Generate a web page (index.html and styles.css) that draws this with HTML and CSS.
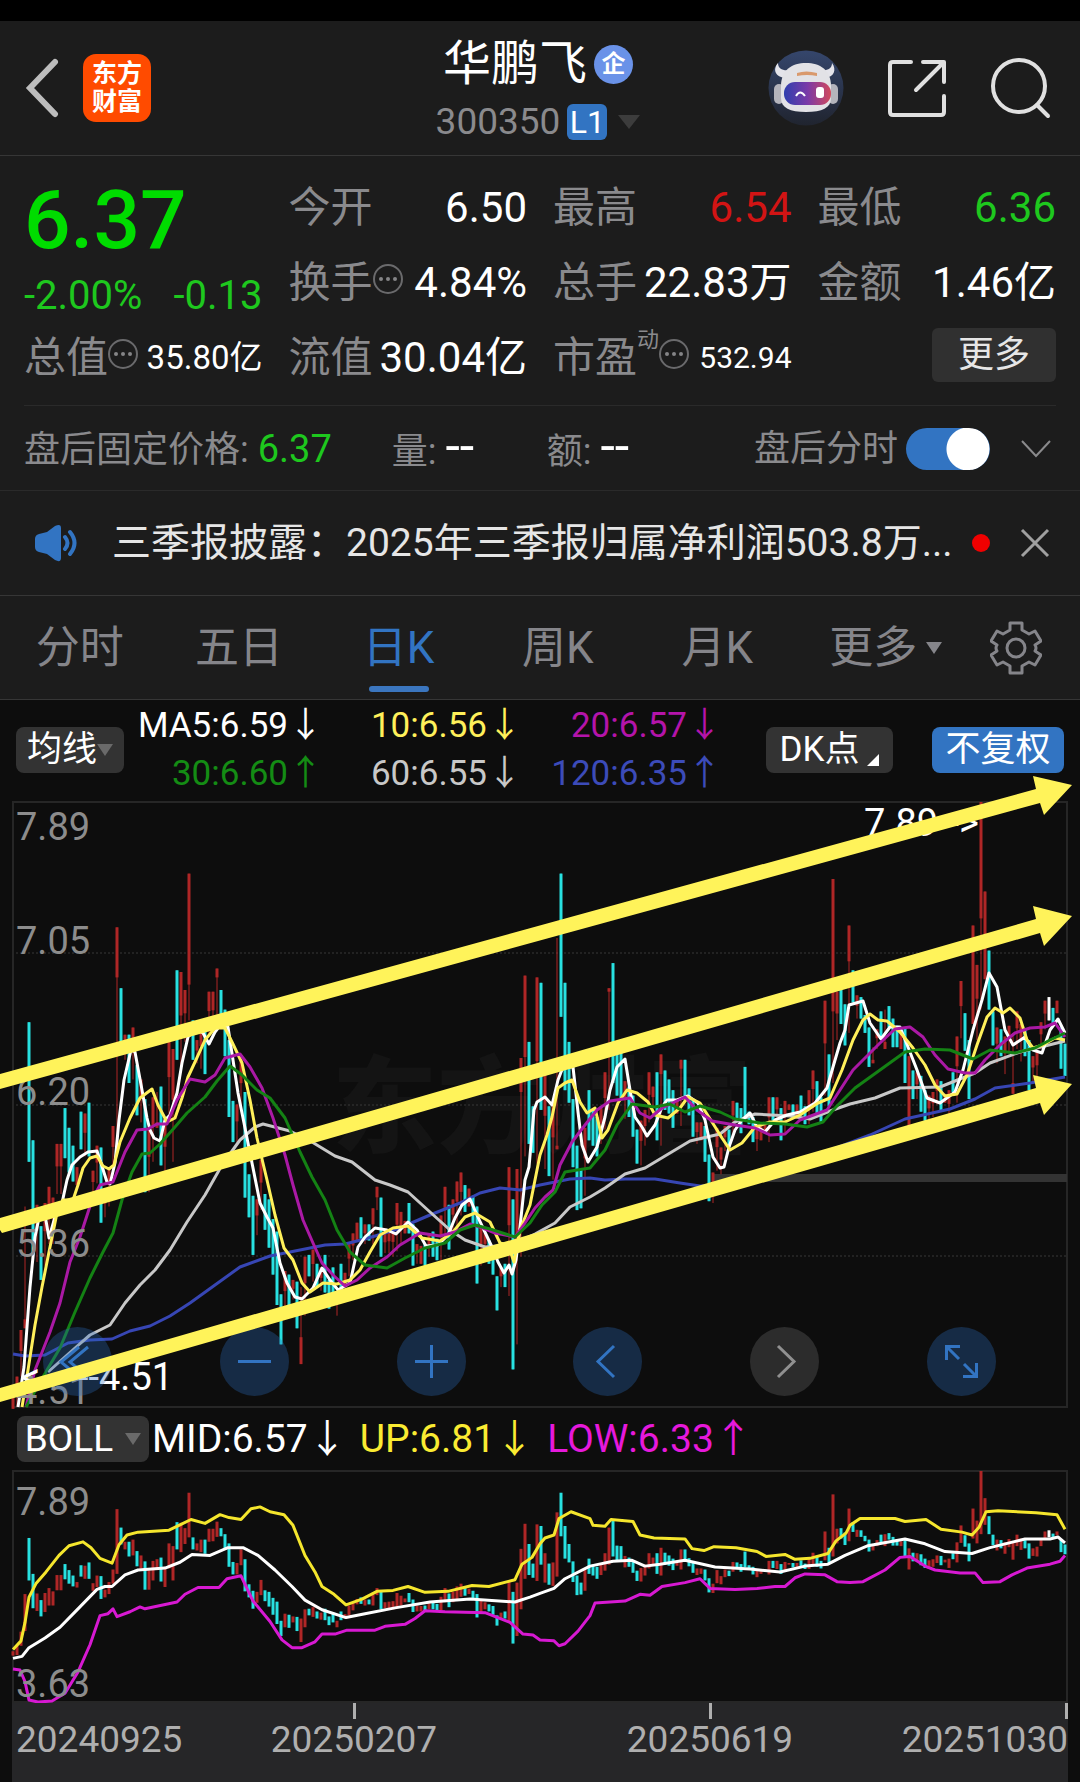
FILE: index.html
```html
<!DOCTYPE html>
<html lang="zh-CN">
<head>
<meta charset="utf-8">
<meta name="viewport" content="width=device-width, initial-scale=1">
<title>华鹏飞 300350</title>
<link rel="stylesheet" href="styles.css">
</head>
<body>
<header class="topbar">
  <div class="topbar-left">
    <button class="icon-btn" aria-label="返回"><svg width="36" height="60" viewBox="0 0 36 60"><path d="M31 4 6 30l25 26" fill="none" stroke="#bdbdbd" stroke-width="6" stroke-linecap="round"/></svg></button>
    <a class="logo" href="#">东方<br>财富</a>
  </div>
  <div class="title">
    <h1 class="stock-name">华鹏飞<span class="badge-corp">企</span></h1>
    <button class="stock-code">300350<span class="badge-l1">L1</span><span class="caret caret-lg"></span></button>
  </div>
  <div class="topbar-right">
    <button class="icon-btn" aria-label="助手"><svg width="76" height="76" viewBox="0 0 76 76">
      <defs>
        <linearGradient id="visor" x1="0" x2="1"><stop offset="0" stop-color="#2f3fae"/><stop offset=".5" stop-color="#7a3aa8"/><stop offset="1" stop-color="#d2495c"/></linearGradient>
        <linearGradient id="sky" x1="0" x2="0" y1="0" y2="1"><stop offset="0" stop-color="#35466c"/><stop offset="1" stop-color="#20242f"/></linearGradient>
      </defs>
      <circle cx="38" cy="38" r="37.500" fill="url(#sky)"/>
      <path d="M17 28C8 27 4 20 10 13c0 6 5 8 12 7zM57 28c9-1 12-8 7-15 0 6-5 8-12 7z" fill="#e4e4ea"/>
      <rect x="6" y="34" width="10" height="20" rx="5" fill="#b4b4bc"/><rect x="60" y="34" width="10" height="20" rx="5" fill="#b4b4bc"/>
      <path d="M13 36c0-16 11-23 25-23s25 7 25 23v12c0 10-9 14-25 14s-25-4-25-14z" fill="#e2e2e6"/>
      <path d="M29 23q9-3 20 0v3q-10-2-20 0z" fill="#d9996c"/>
      <rect x="16" y="32" width="47" height="23" rx="11" fill="url(#visor)"/>
      <path d="M28 46q4-7 9 0" fill="none" stroke="#fff" stroke-width="2"/><rect x="48" y="37" width="8" height="11" rx="3" fill="#fff"/>
    </svg></button>
    <button class="icon-btn" aria-label="分享"><svg width="60" height="60" viewBox="0 0 60 60"><path d="M24 4H6q-3 0-3 3v47q0 3 3 3h48q3 0 3-3V38M36 4h21v20M56 5 29 32" fill="none" stroke="#e0e0e0" stroke-width="4" stroke-linecap="round" stroke-linejoin="round"/></svg></button>
    <button class="icon-btn" aria-label="搜索"><svg width="62" height="62" viewBox="0 0 62 62"><circle cx="29" cy="29" r="26" fill="none" stroke="#e0e0e0" stroke-width="4"/><path d="m47 48 11 11" stroke="#e0e0e0" stroke-width="4" stroke-linecap="round"/></svg></button>
  </div>
</header>

<section class="quote">
  <div class="price-block">
    <strong class="price">6.37</strong>
    <div class="change"><span>-2.00%</span><span>-0.13</span></div>
  </div>
  <div class="cell"><span class="label">今开</span><span class="value">6.50</span></div>
  <div class="cell"><span class="label">最高</span><span class="value up">6.54</span></div>
  <div class="cell"><span class="label">最低</span><span class="value down">6.36</span></div>
  <div class="cell"><span class="label">换手<svg class="more-dot" viewBox="0 0 30 30"><use href="#dots"/></svg></span><span class="value">4.84%</span></div>
  <div class="cell"><span class="label">总手</span><span class="value">22.83万</span></div>
  <div class="cell"><span class="label">金额</span><span class="value">1.46亿</span></div>
  <div class="cell"><span class="label">总值<svg class="more-dot" viewBox="0 0 30 30"><use href="#dots"/></svg></span><span class="value mid">35.80亿</span></div>
  <div class="cell"><span class="label">流值</span><span class="value">30.04亿</span></div>
  <div class="cell"><span class="label">市盈<sup class="dyn">动</sup><svg class="more-dot" viewBox="0 0 30 30"><use href="#dots"/></svg></span><span class="value small">532.94</span></div>
  <div class="cell cell-end"><button class="more-btn">更多</button></div>
</section>
<svg class="defs" width="0" height="0"><defs><g id="dots"><circle cx="15" cy="15" r="14" fill="none" stroke="#6a6a6c" stroke-width="2"/><g fill="#858587"><circle cx="8" cy="15" r="2"/><circle cx="15" cy="15" r="2"/><circle cx="22" cy="15" r="2"/></g></g></defs></svg>

<section class="after-hours">
  <span>盘后固定价格: <b class="fixed">6.37</b></span>
  <span class="stat">量: <b class="dash">--</b></span>
  <span class="stat">额: <b class="dash">--</b></span>
  <label class="toggle">盘后分时<input type="checkbox" role="switch" checked></label>
  <button class="icon-btn" aria-label="展开"><svg width="32" height="20" viewBox="0 0 32 20"><path d="m2 2 14 15L30 2" fill="none" stroke="#8a8a8c" stroke-width="2"/></svg></button>
</section>

<section class="notice">
  <svg width="46" height="38" viewBox="0 0 46 38"><path d="M2 15q0-4 4-5l8-2 8-6q6-3 6 2v30q0 5-6 2l-8-6-8-2q-4-1-4-5z" fill="#3274c2"/><path d="M32 13q5 6 0 12M37 8q9 11 0 22" fill="none" stroke="#3274c2" stroke-width="4" stroke-linecap="round"/></svg>
  <a class="notice-text" href="#">三季报披露：2025年三季报归属净利润503.8万...</a>
  <i class="red-dot"></i>
  <button class="icon-btn" aria-label="关闭"><svg width="30" height="30" viewBox="0 0 30 30"><path d="m2 2 26 26M28 2 2 28" stroke="#a0a0a0" stroke-width="3"/></svg></button>
</section>

<nav class="tabs">
  <button class="tab">分时</button>
  <button class="tab">五日</button>
  <button class="tab active">日K</button>
  <button class="tab">周K</button>
  <button class="tab">月K</button>
  <button class="tab tab-more">更多<span class="caret caret-gray"></span></button>
  <button class="tab" aria-label="设置"><svg width="52" height="54" viewBox="0 0 52 54"><path d="M20 2h12v7l7 4 6-3 6 10-6 4q2 3 0 6l6 4-6 10-6-3-7 4v7H20v-7l-7-4-6 3L1 34l6-4q-2-3 0-6l-6-4L7 10l6 3 7-4z" fill="none" stroke="#85858a" stroke-width="3" stroke-linejoin="round"/><circle cx="26" cy="27" r="9" fill="none" stroke="#85858a" stroke-width="3"/></svg></button>
</nav>

<section class="ma-row">
  <button class="chip">均线<span class="caret"></span></button>
  <div class="ma-grid">
    <span class="c-ma5">MA5:6.59↓</span><span class="c-ma10">10:6.56↓</span><span class="c-ma20">20:6.57↓</span>
    <span class="c-ma30">30:6.60↑</span><span class="c-ma60">60:6.55↓</span><span class="c-ma120">120:6.35↑</span>
  </div>
  <button class="chip chip-dk">DK点<span class="corner"></span></button>
  <button class="chip chip-blue">不复权</button>
</section>

<section class="chart">
  <svg class="plot" viewBox="0 802 1080 606">
    <text class="watermark" x="332" y="1144">东方财富</text>
    <path class="gridline" d="M12 953H1067M12 1105H1067M12 1256H1067"/>
    <rect class="frame" x="13" y="802" width="1054" height="605"/>
    <rect x="713" y="1174" width="354" height="8" fill="#333"/>
    <g id="candles"></g>
    <g class="ma-lines">
      <polyline class="s-ma120" points="13,1354 25,1356 45,1355 68,1343 90,1340 112,1339 130,1331 150,1326 170,1316 190,1303 215,1285 240,1267 270,1256 300,1250 325,1245 345,1244 365,1239 395,1230 430,1215 460,1203 480,1193 500,1188 520,1190 540,1185 570,1179 590,1178 605,1180 625,1179 655,1179 680,1183 700,1186 740,1184 800,1162 870,1135 905,1119 950,1109 975,1099 995,1088 1030,1083 1065,1077"/>
      <polyline class="s-ma60" points="48,1372 75,1348 90,1335 110,1325 125,1303 140,1285 155,1270 170,1250 187,1222 205,1195 222,1165 240,1140 255,1127 263,1124 290,1131 312,1142 335,1156 352,1162 375,1180 390,1185 408,1192 430,1212 450,1230 465,1240 485,1247 510,1245 535,1234 555,1223 570,1207 590,1197 605,1188 625,1174 645,1168 665,1156 690,1141 720,1134 735,1122 755,1114 790,1116 810,1119 830,1111 850,1104 875,1098 900,1088 940,1087 965,1077 975,1073 990,1063 1020,1052 1045,1046 1065,1041"/>
      <polyline class="s-ma5" points="18,1407 24,1367 30,1287 35,1237 40,1213 45,1215 49,1238 55,1217 62,1203 67,1180 72,1165 80,1157 88,1152 97,1151 100,1160 107,1182 110,1184 115,1163 119,1120 124,1080 131,1050 135,1052 142,1090 147,1118 150,1130 154,1138 160,1141 165,1120 170,1115 177,1093 182,1063 188,1037 197,1028 203,1033 209,1044 215,1032 222,1023 228,1027 233,1060 238,1093 244,1123 252,1163 260,1203 267,1217 273,1228 280,1263 287,1283 295,1297 302,1299 313,1288 322,1268 330,1280 338,1290 350,1283 358,1247 365,1237 375,1228 387,1230 396,1234 408,1222 417,1230 426,1246 438,1245 448,1235 455,1218 462,1205 470,1199 477,1215 483,1228 492,1247 498,1262 504,1273 509,1265 512,1274 516,1260 520,1227 525,1180 529,1167 534,1110 537,1102 545,1097 552,1105 558,1080 563,1067 573,1067 578,1112 582,1145 588,1162 597,1147 605,1117 610,1090 617,1067 625,1059 630,1090 635,1117 642,1127 647,1136 655,1125 662,1107 667,1100 677,1100 688,1096 698,1103 705,1120 713,1157 720,1168 724,1167 729,1147 735,1130 742,1120 750,1113 757,1127 765,1132 775,1120 787,1115 800,1112 815,1103 827,1088 833,1067 840,1043 845,1030 849,1005 863,1001 870,1023 881,1039 890,1027 900,1027 908,1047 917,1070 927,1098 940,1103 955,1092 963,1070 973,1030 982,1000 989,973 997,987 1005,1030 1013,1045 1025,1037 1033,1050 1042,1053 1050,1030 1058,1019 1065,1033"/>
      <polyline class="s-ma10" points="22,1407 28,1370 35,1325 42,1287 50,1247 57,1213 63,1200 73,1200 78,1185 83,1168 90,1158 97,1156 103,1166 109,1169 114,1165 120,1142 130,1118 140,1098 152,1089 158,1105 167,1122 175,1118 182,1098 188,1077 195,1062 205,1040 215,1028 225,1028 232,1042 242,1063 250,1100 257,1138 267,1180 275,1215 284,1248 293,1260 302,1283 310,1292 323,1283 337,1284 350,1280 360,1270 370,1252 380,1235 393,1228 408,1226 422,1238 440,1241 453,1232 465,1217 475,1213 490,1222 500,1243 508,1245 514,1262 520,1230 530,1205 540,1155 547,1135 552,1117 558,1088 565,1083 572,1080 580,1102 587,1113 595,1108 602,1138 608,1130 618,1103 627,1090 637,1093 648,1102 655,1115 668,1118 680,1108 688,1097 700,1103 712,1122 722,1138 730,1150 742,1143 755,1127 770,1122 785,1122 800,1115 818,1103 830,1098 842,1070 853,1040 863,1020 870,1014 878,1020 887,1021 900,1032 913,1048 925,1065 935,1085 945,1096 957,1094 967,1075 977,1045 987,1017 995,1008 1003,1013 1010,1008 1020,1018 1027,1040 1033,1048 1043,1045 1055,1038 1065,1040"/>
      <polyline class="s-ma20" points="26,1407 35,1370 50,1332 60,1303 70,1262 80,1237 92,1200 100,1185 113,1182 125,1152 137,1130 148,1129 157,1124 167,1124 177,1100 190,1079 205,1082 215,1075 225,1058 240,1054 250,1067 262,1088 273,1118 285,1155 293,1185 303,1220 313,1243 322,1263 333,1275 345,1286 357,1280 370,1268 387,1257 400,1245 420,1233 440,1236 455,1232 470,1224 483,1228 495,1233 515,1237 525,1223 535,1208 545,1197 553,1190 560,1165 572,1142 585,1125 597,1110 610,1101 630,1098 640,1113 650,1118 662,1108 685,1097 697,1110 712,1121 735,1125 755,1128 770,1135 785,1134 800,1120 827,1110 840,1090 853,1070 867,1056 880,1043 895,1029 910,1027 923,1037 935,1055 948,1069 965,1073 975,1073 985,1060 1000,1045 1015,1033 1030,1028 1045,1027 1055,1023 1065,1037"/>
      <polyline class="s-ma30" points="26,1407 47,1370 60,1348 75,1312 90,1278 103,1252 113,1233 122,1200 132,1172 142,1154 150,1153 160,1144 175,1127 187,1113 205,1097 217,1081 230,1066 242,1075 257,1090 270,1098 285,1118 300,1152 312,1177 325,1200 337,1230 350,1252 365,1265 387,1268 405,1258 425,1248 445,1243 460,1230 475,1225 490,1229 515,1237 530,1223 542,1205 555,1192 565,1172 577,1170 590,1168 605,1150 617,1125 632,1104 655,1107 670,1104 685,1112 700,1106 720,1112 735,1119 760,1123 785,1124 807,1127 823,1122 835,1108 855,1088 880,1070 905,1052 925,1049 950,1050 973,1059 990,1050 1015,1053 1035,1048 1050,1040 1065,1033"/>
    </g>
    <g class="scale">
      <text x="16" y="840">7.89</text><text x="16" y="954">7.05</text><text x="16" y="1105">6.20</text><text x="16" y="1257">5.36</text><text x="16" y="1404">4.51</text>
    </g>
    <g class="marks"><text x="864" y="836">7.89--&gt;</text><text x="21" y="1390">&lt;</text><text x="78" y="1390">--4.51</text></g>
  </svg>
  <div class="chart-tools">
    <button class="tool" aria-label="最早"><svg viewBox="0 0 69 69"><path d="M36 20 18 35l18 15M45 20 27 35l18 15"/></svg></button>
    <button class="tool" aria-label="缩小"><svg viewBox="0 0 69 69"><path d="M18 34.500h33"/></svg></button>
    <button class="tool" aria-label="放大"><svg viewBox="0 0 69 69"><path d="M18 34.500h33M34.500 18v33"/></svg></button>
    <button class="tool" aria-label="向左"><svg viewBox="0 0 69 69"><path d="M41 19 25 34.500 41 50"/></svg></button>
    <button class="tool tool-off" aria-label="向右" disabled><svg viewBox="0 0 69 69"><path d="m28 19 16 15.500L28 50"/></svg></button>
    <button class="tool" aria-label="全屏"><svg viewBox="0 0 69 69"><path d="M19.500 33V19.500H33M20 20l12 12M49.500 36v13.500H36M49 49 37 37"/></svg></button>
  </div>
  <svg class="trend" viewBox="0 802 1080 606">
    <path d="M0 1074 1036 789 1033 776 1072 785 1044 815 1040 803 0 1089z"/>
    <path d="M0 1218 1036 919 1033 906 1072 916 1044 946 1040 933 2 1233 0 1230z"/>
    <path d="M0 1388 1036 1088 1033 1075 1072 1084 1044 1115 1040 1103 0 1402z"/>
  </svg>
</section>

<section class="boll-row">
  <button class="chip chip-boll">BOLL<span class="caret"></span></button>
  <span class="c-ma5">MID:6.57↓</span><span class="c-up">UP:6.81↓</span><span class="c-low">LOW:6.33↑</span>
</section>

<section class="chart">
  <svg class="plot-boll" viewBox="0 1472 1080 240" preserveAspectRatio="none">
    <path class="frame" d="M13 1473H1067V1711H13z"/>
    <g id="bars"></g>
    <g class="boll-lines">
      <polyline class="s-low" points="13,1677 20,1678 25,1690 29,1709 38,1711 52,1710 65,1702 78,1680 90,1652 100,1622 108,1620 113,1615 117,1623 130,1618 140,1613 145,1615 177,1608 185,1600 198,1593 219,1593 227,1584 241,1581 253,1607 270,1628 282,1647 292,1655 302,1655 315,1649 322,1641 335,1641 347,1637 375,1637 385,1633 405,1631 415,1625 425,1617 445,1618 485,1619 510,1629 523,1641 533,1642 540,1647 554,1648 559,1653 565,1651 578,1638 590,1622 595,1609 625,1607 640,1600 650,1601 662,1592 685,1588 700,1584 710,1594 735,1595 757,1594 775,1592 785,1592 795,1583 805,1579 825,1580 837,1587 850,1588 863,1587 885,1575 900,1562 910,1561 925,1571 935,1575 960,1578 975,1578 983,1588 1000,1587 1012,1580 1027,1573 1050,1569 1060,1566 1065,1560"/>
      <polyline class="s-up" points="13,1657 21,1648 25,1629 29,1603 36,1589 46,1577 59,1560 69,1550 83,1546 91,1552 100,1563 112,1568 119,1549 127,1539 138,1536 169,1534 181,1528 191,1523 205,1527 220,1518 229,1521 241,1523 251,1512 260,1510 270,1515 284,1518 293,1529 305,1560 315,1577 322,1592 334,1600 346,1611 362,1605 377,1597 393,1596 408,1592 425,1598 448,1597 472,1591 489,1592 515,1585 522,1569 532,1562 540,1548 545,1542 554,1539 559,1522 571,1515 590,1522 593,1529 605,1530 611,1523 633,1525 640,1539 654,1542 685,1543 692,1553 704,1555 714,1551 736,1552 757,1556 766,1561 785,1559 795,1564 810,1563 828,1558 836,1545 846,1537 850,1529 860,1522 895,1522 905,1525 926,1523 941,1533 962,1536 972,1539 979,1531 986,1515 998,1514 1036,1516 1057,1518 1065,1533"/>
      <polyline class="s-ma5" points="13,1666 22,1664 29,1655 45,1645 60,1634 78,1615 97,1595 105,1592 112,1592 125,1580 138,1575 165,1573 180,1567 192,1559 210,1560 228,1552 243,1552 258,1560 275,1575 292,1592 305,1606 322,1616 346,1624 365,1620 395,1614 430,1608 470,1605 515,1608 530,1603 540,1599 554,1594 565,1584 590,1571 613,1566 632,1565 645,1571 660,1569 685,1565 715,1572 750,1574 780,1577 805,1571 828,1569 845,1560 868,1550 905,1543 925,1548 945,1556 972,1558 990,1552 1025,1543 1050,1543 1058,1541 1065,1547"/>
    </g>
  </svg>
  <div class="boll-scale"><span>7.89</span><span>3.63</span></div>
</section>

<footer class="axis">
  <span>20240925</span><span class="tick">20250207</span><span class="tick">20250619</span><span class="tick tick-end">20251030</span>
</footer>
<script src="chart.js"></script>
</body>
</html>
```
FILE: styles.css
```css
* { box-sizing: border-box; }
body {
  margin: 0;
  padding-top: 21px;
  background: #000;
  color: #fff;
  font-family: Roboto, "Noto Sans CJK SC", sans-serif;
  font-size: 36px;
  line-height: 48px;
}
button {
  margin: 0;
  padding: 0;
  border: 0;
  background: none;
  color: inherit;
  font: inherit;
  white-space: nowrap;
}
a { color: inherit; text-decoration: none; }
b { font-weight: 400; }
svg { display: block; }
.defs { position: absolute; }
.icon-btn { display: flex; align-items: center; }

.topbar {
  display: grid;
  grid-template-columns: 1fr auto 1fr;
  align-items: center;
  height: 135px;
  padding: 0 28px 0 24px;
  background: #1c1c1c;
  border-bottom: 1px solid #363636;
}
.topbar-left { display: flex; align-items: center; gap: 23px; }
.logo {
  width: 68px;
  height: 68px;
  padding-top: 6px;
  border-radius: 13px;
  background: #ff4b00;
  font-size: 25px;
  font-weight: 700;
  line-height: 28px;
  text-align: center;
}
.topbar-right { display: flex; align-items: center; justify-content: flex-end; gap: 43px; }
.title { display: flex; flex-direction: column; align-items: center; gap: 4px; padding-top: 4px; }
.stock-name {
  display: flex;
  align-items: center;
  gap: 7px;
  margin: 0;
  font-size: 48px;
  font-weight: 400;
  line-height: 60px;
}
.badge-corp {
  width: 39px;
  height: 39px;
  border-radius: 50%;
  background: #6a92e8;
  font-size: 24px;
  font-weight: 700;
  line-height: 38px;
  text-align: center;
}
.stock-code { display: flex; align-items: center; color: #8a8a8d; font-size: 37px; }
.badge-l1 {
  width: 40px;
  height: 36px;
  margin-left: 7px;
  border-radius: 6px;
  background: #3274c2;
  color: #fff;
  font-size: 32px;
  line-height: 36px;
}
.caret {
  display: inline-block;
  border: 8px solid transparent;
  border-top: 12px solid #6a6a6a;
  border-bottom: 0;
}
.caret-lg { margin-left: 11px; border-width: 14px 11px 0; border-top-color: #3c3c3c; }
.caret-gray { border-top-color: #85858a; }

.quote {
  display: grid;
  grid-template-columns: repeat(4, 1fr);
  grid-auto-rows: 75px;
  column-gap: 26px;
  padding: 14px 24px 10px;
  background: #1c1c1c;
}
.price-block { grid-row: span 2; display: flex; flex-direction: column; color: #00dc00; }
.price { height: 96px; font-size: 82px; font-weight: 500; line-height: 100px; }
.change { display: flex; justify-content: space-between; color: #1ec81e; font-size: 40px; line-height: 60px; }
.cell { display: flex; align-items: center; justify-content: space-between; white-space: nowrap; }
.cell-end { justify-content: flex-end; padding-bottom: 5px; }
.label { display: flex; align-items: center; color: #8a8a8d; font-size: 42px; }
.value { font-size: 42px; }
.mid { font-size: 33px; }
.small { font-size: 30px; }
.up { color: #d21414; }
.down { color: #1ec81e; }
.more-dot { width: 30px; height: 30px; flex: none; margin-bottom: 8px; }
.dyn { align-self: flex-start; font-size: 22px; line-height: 12px; }
.more-btn { width: 124px; height: 54px; border-radius: 6px; background: #303030; color: #e6e6e6; line-height: 54px; }

.after-hours {
  display: flex;
  align-items: center;
  gap: 60px;
  height: 86px;
  padding: 3px 28px 0 24px;
  background: linear-gradient(#2a2a2a, #2a2a2a) center top / calc(100% - 48px) 1px no-repeat #1c1c1c;
  border-bottom: 1px solid #2a2a2a;
  color: #8a8a8d;
  white-space: nowrap;
}
.stat { min-width: 95px; }
.fixed { color: #1ec81e; font-size: 38px; }
.dash { color: #fff; font-size: 52px; }
.toggle { display: flex; align-items: center; gap: 8px; margin: 0 -30px 0 auto; }
.toggle input {
  width: 84px;
  height: 42px;
  margin: 0;
  border-radius: 21px;
  appearance: none;
  background: radial-gradient(circle at 62px 21px, #fff 21px, transparent 22px) #3274c2;
}

.notice {
  display: flex;
  align-items: center;
  height: 105px;
  padding: 0 30px 0 33px;
  background: #1c1c1c;
  border-bottom: 1px solid #363636;
}
.notice-text { flex: 1; margin-left: 33px; overflow: hidden; color: #e6e6e6; font-size: 39px; white-space: nowrap; }
.red-dot { width: 18px; height: 18px; margin: 0 30px 0 20px; border-radius: 50%; background: #f00000; }

.tabs {
  display: grid;
  grid-template-columns: repeat(6, 4fr) 3fr;
  height: 104px;
  padding-right: 4px;
  background: #1c1c1c;
  border-bottom: 1px solid #363636;
}
.tab { position: relative; display: flex; align-items: center; justify-content: center; color: #85858a; font-size: 44px; }
.tab-more { gap: 9px; padding-left: 18px; }
.active { color: #3274c2; }
.active::after { content: ""; position: absolute; bottom: 7px; width: 60px; height: 6px; border-radius: 3px; background: #3b76bf; }

.ma-row {
  display: flex;
  align-items: center;
  height: 102px;
  padding: 0 16px 2px;
  background: #0d0d0d;
  font-size: 35px;
}
.chip {
  display: flex;
  align-items: center;
  justify-content: center;
  width: 108px;
  height: 46px;
  border-radius: 8px;
  background: #333;
}
.ma-grid { flex: 1; display: grid; grid-template-columns: 199fr 199fr 200fr; text-align: right; white-space: nowrap; }
.chip-dk { gap: 8px; width: 127px; margin-left: 44px; }
.chip-blue { width: 132px; margin-left: 39px; background: #3274c2; }
.corner { align-self: flex-end; margin-bottom: 7px; border: 6px solid #fff; border-top-color: transparent; border-left-color: transparent; }
.c-ma5 { color: #fff; }
.c-ma10 { color: #fff05a; }
.c-ma20 { color: #b414aa; }
.c-ma30 { color: #148c14; }
.c-ma60 { color: #c8c8c8; }
.c-ma120 { color: #3c4bb9; }
.c-up { color: #faeb32; }
.c-low { color: #e619dc; }

.chart { position: relative; background: #0d0d0d; }
.plot, .trend { width: 100%; height: auto; overflow: visible; }
.trend { position: absolute; top: 0; left: 0; fill: #fff35a; pointer-events: none; }
.frame { fill: none; stroke: #262626; stroke-width: 2; }
.gridline { fill: none; stroke: #383838; stroke-width: 1; stroke-dasharray: 2 2; }
.watermark { fill: #141414; font-size: 105px; font-weight: 900; }
.scale text { fill: #8c8c8c; font-size: 38px; }
.marks text { fill: #fff; font-size: 38px; }
polyline { fill: none; stroke-width: 3; stroke-linejoin: round; vector-effect: non-scaling-stroke; }
.s-ma5 { stroke: #fff; }
.s-ma10 { stroke: #fff05a; }
.s-ma20 { stroke: #aa19a5; }
.s-ma30 { stroke: #148214; }
.s-ma60 { stroke: #c8c8c8; }
.s-ma120 { stroke: #3746b4; }
.s-up { stroke: #f5e62d; }
.s-low { stroke: #d719d2; }
.k-r { stroke: #af2626; }
.k-c { stroke: #28e1e1; }
.k-w { stroke: #fff; }

.chart-tools {
  position: absolute;
  right: 84px;
  bottom: 12px;
  left: 43px;
  display: flex;
  justify-content: space-between;
}
.tool { width: 69px; height: 69px; border-radius: 50%; background: rgba(45, 110, 190, .32); }
.tool svg { fill: none; stroke: #3274c2; stroke-width: 3; }
.tool-off { background: #2c2c2c; }
.tool-off svg { stroke: #909090; }

.boll-row {
  display: flex;
  align-items: center;
  gap: 13px;
  height: 62px;
  padding-left: 17px;
  background: #0d0d0d;
  font-size: 39px;
  white-space: nowrap;
}
.chip-boll { gap: 12px; width: 132px; margin-right: -10px; font-size: 37px; }
.plot-boll { width: 100%; height: 233px; }
.boll-scale {
  position: absolute;
  top: 8px;
  bottom: -5px;
  left: 16px;
  display: flex;
  flex-direction: column;
  justify-content: space-between;
  color: #8c8c8c;
  font-size: 38px;
}

.axis {
  display: grid;
  grid-template-columns: minmax(0, 164fr) minmax(0, 356fr) minmax(0, 356fr) minmax(0, 180fr);
  height: 79px;
  padding-top: 13px;
  border: solid #0d0d0d;
  border-width: 0 12px;
  background: #262628;
  color: #afafaf;
  font-size: 37px;
  white-space: nowrap;
}
.axis span { padding-left: 4px; }
.axis .tick {
  margin-top: -13px;
  padding: 13px 0 0;
  background: linear-gradient(#afafaf, #afafaf) center top / 3px 16px no-repeat;
  text-align: center;
}
.axis .tick-end { background-position: right top; text-align: right; }
```
FILE: chart.js
```js
// Daily bars, oldest first: colour (r rise, c fall, w flat), high, low in cents,
// optionally followed by the top and bottom of the thick body.
const bars = `r458,450 r468,451 r494,468 r563,495,500,495 c666,588 c600,537 r564,532 c552,522 r565,530 r574,542
r568,542 r598,570 r598,570 c618,590 c607,582 c597,577 r585,575 c616,595 r615,591 c621,591
r583,569 r597,576 c596,554 r571,557 r585,563 r608,582 r719,600,719,691 c685,654 r659,645 c659,632
r663,634 c642,614 r634,610 c623,571 r607,571 r624,588 r627,607,610,607 c630,586 r613,576 r656,610
r651,588 c695,645 r694,640 r684,655 r749,667,749,687 c667,645 r656,643 r663,640 c663,637 r683,659
r683,660 r696,668,696,691 c684,669 c673,647 c656,613 c622,599 r620,599 r645,616 c627,568 c581,557
c569,536 r567,547 r589,561 c570,550 c567,540 c556,525 c549,508 c514,486 r527,502 c525,501
r522,511 c521,495 r518,475,490,475 r535,502 c536,524 r539,521 c531,518 r529,516 c536,515 c522,506
c529,511 r514,502 c531,515 r526,518 r542,524 r548,533 r554,544 c557,545 r553,542 c553,544
r562,542 r574,561 c568,535 r548,537 r549,537 r550,535 r565,538 r560,542 r555,548 c565,548
c553,530 r542,531 r541,531 c542,530 r547,535 c549,535 c545,533 r558,533 r574,548 c564,539
r567,548 r577,552 r582,558 c575,560 r573,563 c569,552 c563,520 r552,530 r548,535 c544,531
c541,525 c524,505 r529,518 c531,518 r585,513 c567,472 r584,486 r646,535,646,627 r692,591 c655,598
c619,593 r691,587 c688,617 r638,584 c619,580 r621,578 r713,595,597,595 c749,669 c688,628 c655,621
c623,585 c597,561 c584,562 r607,569 c628,600 c617,597 c613,591 r619,598 r638,606 r685,617,685,683
c699,632 c652,625 c651,623 r633,612 c630,613 c625,602 c606,587 r611,586 r617,597 r638,610
r630,617 c638,600 r648,597,648,637 c639,617 c634,615 c628,607 r623,615 r645,608,645,640 c645,624 c629,614
c623,602 r610,598 r610,600 c608,588 c592,566 r582,565 r607,583 r596,581 r608,594 c606,596
r622,604 c621,611 c618,604 c641,612 c616,609 c613,599 r606,594 r608,600 r609,604 r624,599
c624,611 r624,609 c618,600 r622,604 r620,617 c620,612 r620,612 c625,614 c619,609 r628,609
r639,616 c633,613 c624,610 r678,625 c648,619 r746,632,746,672 r683,656 c684,665 c676,653 r720,660,720,700
c695,677 r681,668 c680,668 c670,660 c663,641 r652,643,645,643 r662,651 c672,658 r673,651,655,651 c675,663
c668,652 c664,652 r660,651 c663,632 r647,608,647,608 c639,623 r638,623 c636,616 c628,611 r625,609
r627,613 r634,620 c633,616 r626,621 r628,611 c638,627 r658,621 r689,657,689,675 c671,650 c656,623
r720,665,720,665 r698,656 r789,673,789,724 r739,690,739,690 c706,673 c672,653 r663,643 c662,647 r658,637 r664,649
r660,626,632,626 r672,651 r665,644 c662,647 c656,628 r647,633 r650,632 r666,651 r678,662 w680,667
c674,664 r678,671 c663,640 c654,636`.split(/\s+/);

const step = 4;
const left = 13;
const high = 789;
let main = "";
let mini = "";

const line = (x, top, bottom, colour, width) =>
  `<path class="k-${colour}" stroke-width="${width}" d="M${x} ${top.toFixed(1)}V${bottom.toFixed(1)}"/>`;

bars.forEach((bar, i) => {
  const colour = bar[0];
  const [hi, lo, bodyTop = hi, bodyLow] = bar.slice(1).split(",").map(Number);
  const rising = colour === "r";
  const end = bodyLow ?? (rising && hi - lo > 10 ? hi - (hi - lo) * 0.45 : lo);
  const x = left + step * i;
  const y = (p) => 802 + (high - p) * 1.79;
  const yMini = (p) => 1473 + (high - p) * 0.561;
  main += line(x, y(bodyTop), y(end), colour, 3);
  main += line(x, y(hi), y(lo), colour, 1);
  mini += line(x, yMini(hi), yMini(lo), colour, 3);
});

document.getElementById("candles").innerHTML = main;
document.getElementById("bars").innerHTML = mini;
```
